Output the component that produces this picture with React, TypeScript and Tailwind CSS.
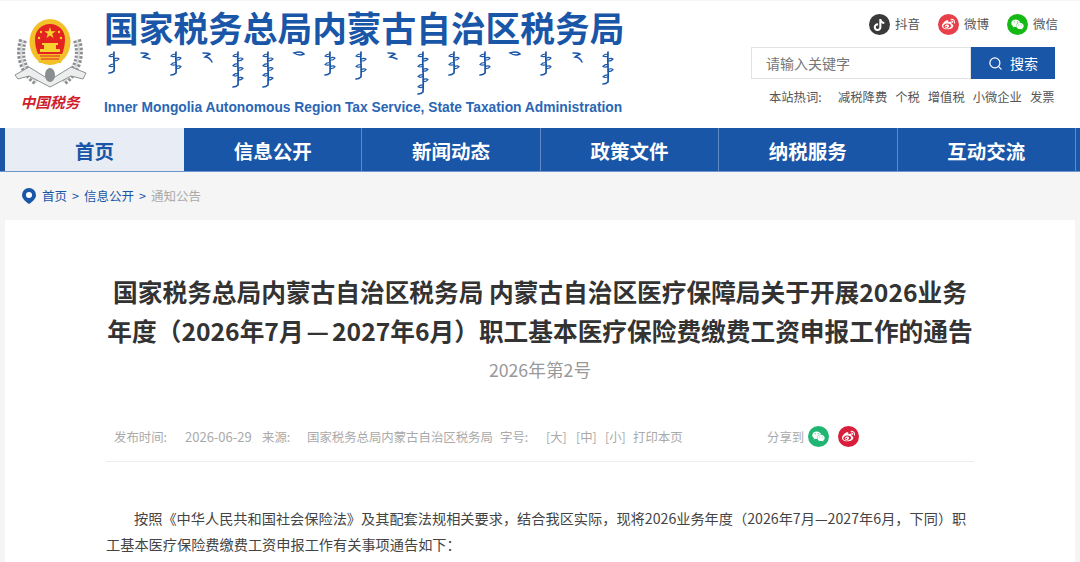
import { Search } from "lucide-react";
import { FaTiktok, FaWeibo, FaWeixin } from "react-icons/fa";

const cjk = "font-['Noto_Sans_CJK_SC','Liberation_Sans',sans-serif]";

const NAV = ["信息公开", "新闻动态", "政策文件", "纳税服务", "互动交流"];

function Emblem() {
  return (
    <div className="flex w-[76px] flex-col items-center">
      <svg width="76" height="70" viewBox="0 0 76 70" className="shrink-0">
        <path d="M10 22c-5 16 0 32 14 42M64 22c5 16 0 32-14 42" fill="none" stroke="#8b8f92" strokeWidth="8" strokeDasharray="2.500 1.500" />
        <path d="M10 22c-5 16 0 32 14 42M64 22c5 16 0 32-14 42" fill="none" stroke="#d6d8d9" strokeWidth="2" />
        <path d="M2 57l14-8 21 13 21-13 15 6-3 6-12-3-21 11-21-11-11 3z" fill="#eceeee" stroke="#8d9092" strokeWidth="1" />
        <ellipse cx="37" cy="57" rx="5" ry="7" fill="#8a8e90" />
        <ellipse cx="37" cy="24" rx="20.500" ry="23" fill="#f3c02a" />
        <path d="M37 6c9 0 15 7 15 15 0 9-3 16-6 22H28c-3-6-6-13-6-22 0-8 6-15 15-15z" fill="#e2231f" />
        <path d="M37 9l1.400 4.200h4.400l-3.600 2.600 1.400 4.200-3.600-2.600-3.600 2.600 1.400-4.200-3.600-2.600h4.400z" fill="#f8d22e" />
        <circle cx="28" cy="14" r="1.200" fill="#f8d22e" />
        <circle cx="46" cy="14" r="1.200" fill="#f8d22e" />
        <circle cx="26" cy="20" r="1.200" fill="#f8d22e" />
        <circle cx="48" cy="20" r="1.200" fill="#f8d22e" />
        <path d="M29 25h16v2h-2v4h4v3H27v-3h4v-4h-2z" fill="#f8d22e" />
        <path d="M23 36h28l-3 9H26z" fill="#f3c02a" />
        <path d="M27 38h20M28 41h18" stroke="#e2231f" strokeWidth="1" />
      </svg>
      <span className="mt-[3px] -ml-[2px] whitespace-nowrap text-[14.700px] leading-[22px] font-bold text-[#d0202a] italic">中国税务</span>
    </div>
  );
}

// decorative strokes standing in for the vertical script inside the logo image
function MongolianMark({ h, tick }: { h: number; tick: number }) {
  if (h <= 12) {
    return (
      <svg width="18" height={h} viewBox={`0 0 18 ${h}`} className="shrink-0">
        <path
          d={h <= 6 ? "M4 2c4-1.500 8-1.500 10 1-3 1.500-7 1-10-1z" : `M5 2c3 0 6 0 7 1-2 1-4 2-5 3 3 0 5 1 7 ${h - 7}`}
          stroke="#1a56a8"
          strokeWidth="1.500"
          fill="none"
          strokeLinecap="round"
        />
      </svg>
    );
  }
  const step = (h - 8) / tick;
  const ticks = Array.from({ length: tick }, (_, i) => 3 + i * step);
  return (
    <svg width="18" height={h} viewBox={`0 0 18 ${h}`} className="shrink-0">
      <path d={`M9 1c-1 ${h / 3} 1 ${h / 2} 0 ${h - 4}c-1 1-3 2-5 2`} stroke="#1a56a8" strokeWidth="1.700" fill="none" strokeLinecap="round" />
      {ticks.map((y, i) => (
        <path
          key={i}
          d={i % 2 ? `M9 ${y}c2-1 4-1 5 0-1 1.500-3 2-5 2` : `M9 ${y}c-2 0-4 .5-5 2 1.500 1 3 1 5 0`}
          stroke="#1a56a8"
          strokeWidth="1.200"
          fill="none"
          strokeLinecap="round"
        />
      ))}
    </svg>
  );
}

const MONGOL: [number, number][] = [
  [23, 3], [9, 1], [25, 4], [12, 2], [37, 6], [37, 6], [6, 1], [25, 4], [29, 4],
  [9, 1], [44, 7], [25, 4], [25, 4], [6, 1], [25, 4], [12, 2], [34, 5],
];

function Social({ children, bg, label }: { children: React.ReactNode; bg: string; label: string }) {
  return (
    <span className="flex items-center gap-[5px]">
      <span className={`flex h-[21px] w-[21px] items-center justify-center rounded-full text-white ${bg}`}>{children}</span>
      <span className="text-[12.500px] leading-none text-[#555]">{label}</span>
    </span>
  );
}

export default function App() {
  return (
    <div className={`h-[562px] w-[1080px] overflow-hidden bg-[#f5f5f5] ${cjk}`}>
      <header className="flex h-[128px] border-t border-[#f3f5f7] bg-white">
        <div className="ml-[13px] mt-[17px]">
          <Emblem />
        </div>
        <div className="ml-[15px] w-[519px] shrink-0">
          <h1 className="mt-[7px] whitespace-nowrap text-[34.700px] leading-[38px] font-bold text-[#1a56a8]">国家税务总局内蒙古自治区税务局</h1>
          <div className="mt-[5px] flex h-[46px] items-start justify-between pl-[1px] pr-[6px]">
            {MONGOL.map(([h, t], i) => (
              <MongolianMark key={i} h={h} tick={t} />
            ))}
          </div>
          <p className="mt-[1px] whitespace-nowrap font-['Liberation_Sans',sans-serif] text-[13.800px] leading-[20px] font-bold text-[#2a66b4]">
            Inner Mongolia Autonomous Region Tax Service, State Taxation Administration
          </p>
        </div>
        <div className="ml-[128px] flex w-[304px] shrink-0 flex-col items-start">
          <div className="mt-[13px] flex w-[307px] shrink-0 justify-end gap-[18px]">
            <Social bg="bg-[#3a3a3a]" label="抖音">
              <FaTiktok size={12} />
            </Social>
            <Social bg="bg-[#e8404a]" label="微博">
              <FaWeibo size={13} />
            </Social>
            <Social bg="bg-[#16b816]" label="微信">
              <FaWeixin size={13} />
            </Social>
          </div>
          <div className="mt-[12px] flex h-[32px] w-[304px]">
            <div className="flex flex-1 items-center border border-[#e2e2e2] pl-[14px] text-[14px] text-[#777]">请输入关键字</div>
            <button className="flex w-[84px] items-center justify-center gap-[7px] bg-[#1a56a8] text-[14px] text-white">
              <Search size={15} strokeWidth={2} />
              搜索
            </button>
          </div>
          <div className="mt-[9px] flex w-[304px] items-center text-[12.300px] leading-[18px] whitespace-nowrap text-[#555]">
            <span className="ml-[18px] w-[69px]">本站热词:</span>
            <span>减税降费</span>
            <span className="ml-[8px]">个税</span>
            <span className="ml-[8px]">增值税</span>
            <span className="ml-[8px]">小微企业</span>
            <span className="ml-[8px]">发票</span>
          </div>
        </div>
      </header>

      <nav className="flex h-[44px] border-b border-[#6f96cb] bg-[#1a56a8] pl-[5px]">
        <a className="flex w-[179px] items-center justify-center bg-[#e8ecf5] pt-[2px] text-[19.500px] font-bold text-[#1a56a8]">首页</a>
        {NAV.map((n) => (
          <a key={n} className="flex w-[178.400px] items-center justify-center border-r border-[#5f8ac4] pt-[2px] text-[19.500px] font-bold text-white">
            {n}
          </a>
        ))}
      </nav>

      <div className="flex h-[48px] items-center pl-[22px] text-[12.500px] text-[#1a56a8]">
        <svg width="14" height="16" viewBox="0 0 14 16" className="mr-[6px]">
          <path d="M7 0a7 7 0 0 1 7 7c0 4-4 7-7 9-3-2-7-5-7-9a7 7 0 0 1 7-7z" fill="#1a56a8" />
          <circle cx="7" cy="7" r="3" fill="#fff" />
        </svg>
        <span>首页</span>
        <span className="mx-[5px]">&gt;</span>
        <span>信息公开</span>
        <span className="mx-[5px]">&gt;</span>
        <span className="text-[#aaa]">通知公告</span>
      </div>

      <main className="mx-[5px] h-[400px] bg-white px-[101px] pt-[52px]">
        <h2 className="whitespace-nowrap text-center text-[24.700px] leading-[39px] font-bold text-[#333]">
          国家税务总局内蒙古自治区税务局 内蒙古自治区医疗保障局关于开展2026业务
          <br />
          年度（2026年7月<span className="mx-[3px]">—</span>2027年6月）职工基本医疗保险费缴费工资申报工作的通告
        </h2>
        <p className="mt-[6px] text-center text-[17.700px] leading-[26px] text-[#999]">2026年第2号</p>

        <div className="mt-[45px] flex h-[35px] items-start border-b border-[#eee] pl-[8px] text-[12.400px] leading-[20px] whitespace-nowrap text-[#aaa]">
          <span className="w-[71px]">发布时间:</span>
          <span className="w-[77px] text-[13px]">2026-06-29</span>
          <span className="w-[45px]">来源:</span>
          <span className="w-[193px]">国家税务总局内蒙古自治区税务局</span>
          <span className="w-[46px]">字号:</span>
          <span className="w-[30px]">[大]</span>
          <span className="w-[29px]">[中]</span>
          <span className="w-[28px]">[小]</span>
          <span className="w-[134px]">打印本页</span>
          <span className="-mt-[1px] flex items-center gap-[4px]">
            分享到
            <span className="flex h-[21px] w-[21px] items-center justify-center rounded-full bg-[#20b573] text-white">
              <FaWeixin size={13} />
            </span>
            <span className="ml-[5px] flex h-[21px] w-[21px] items-center justify-center rounded-full bg-[#d81e3a] text-white">
              <FaWeibo size={13} />
            </span>
          </span>
        </div>

        <p className="mt-[43px] w-[866px] indent-[28px] text-[14.200px] leading-[26px] text-[#444]">
          按照《中华人民共和国社会保险法》及其配套法规相关要求，结合我区实际，现将2026业务年度（2026年7月—2027年6月，下同）职工基本医疗保险费缴费工资申报工作有关事项通告如下：
        </p>
      </main>
    </div>
  );
}
